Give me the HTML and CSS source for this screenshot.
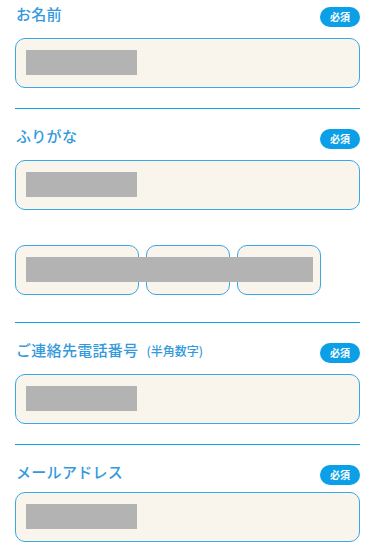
FILE: index.html
```html
<!DOCTYPE html>
<html lang="ja">
<head>
    <meta charset="UTF-8">
    <meta name="viewport" content="width=device-width, initial-scale=1.0">
    <title>お問い合わせフォーム</title>
    <link rel="stylesheet" href="styles.css">
</head>
<body>
    <div class="form">
        <div class="field">
            <div class="field-head">
                <label class="field-label">お名前</label>
                <span class="required">必須</span>
            </div>
            <div class="input"><span class="mask"></span></div>
        </div>

        <hr class="divider">

        <div class="field">
            <div class="field-head">
                <label class="field-label">ふりがな</label>
                <span class="required">必須</span>
            </div>
            <div class="input"><span class="mask"></span></div>

            <div class="input-row">
                <div class="input input-wide"></div>
                <div class="input input-short"></div>
                <div class="input input-short"></div>
                <span class="mask mask-row"></span>
            </div>
        </div>

        <hr class="divider divider-row">

        <div class="field">
            <div class="field-head">
                <label class="field-label">ご連絡先電話番号<span class="field-note">(半角数字)</span></label>
                <span class="required">必須</span>
            </div>
            <div class="input"><span class="mask"></span></div>
        </div>

        <hr class="divider">

        <div class="field field-mail">
            <div class="field-head">
                <label class="field-label">メールアドレス</label>
                <span class="required">必須</span>
            </div>
            <div class="input"><span class="mask"></span></div>
        </div>
    </div>
</body>
</html>
```

FILE: styles.css
```css
body {
    font-family: "Noto Sans CJK JP", "Noto Sans", sans-serif;
    background-color: #fff;
    margin: 0;
    padding: 7px 15px 0;
}
.form {
    width: 345px;
}
.field-head {
    display: flex;
    justify-content: space-between;
    align-items: flex-start;
    height: 20px;
}
.field-label {
    font-size: 15px;
    font-weight: 500;
    line-height: 15px;
    letter-spacing: 0.3px;
    color: #3399dd;
    margin-left: 1px;
    margin-top: -1px;
}
.field-note {
    font-size: 12px;
    font-weight: 500;
    letter-spacing: 0;
    margin-left: 8px;
}
.required {
    display: flex;
    align-items: center;
    justify-content: center;
    width: 40px;
    height: 20px;
    border-radius: 10px;
    background-color: #0a9fe6;
    color: #fff;
    font-size: 10px;
    font-weight: bold;
    line-height: 1;
}
.input {
    box-sizing: border-box;
    height: 50px;
    margin-top: 11px;
    padding: 11px 10px;
    border: 1px solid #39a8e6;
    border-radius: 10px;
    background-color: #f9f5ec;
}
.mask {
    display: block;
    width: 111px;
    height: 25px;
    background-color: #b3b3b3;
}
.input-row {
    position: relative;
    display: flex;
    gap: 7px;
    margin-top: 35px;
}
.input-row .input {
    margin-top: 0;
}
.input-wide {
    width: 124px;
}
.input-short {
    width: 84px;
}
.mask-row {
    position: absolute;
    left: 11px;
    top: 12px;
    width: 287px;
}
.divider {
    height: 1px;
    margin: 20px 0 20px;
    border: none;
    background-color: #0aa3ea;
}
.divider-row {
    margin-top: 27px;
}
.field-mail .input {
    margin-top: 7px;
}
```
